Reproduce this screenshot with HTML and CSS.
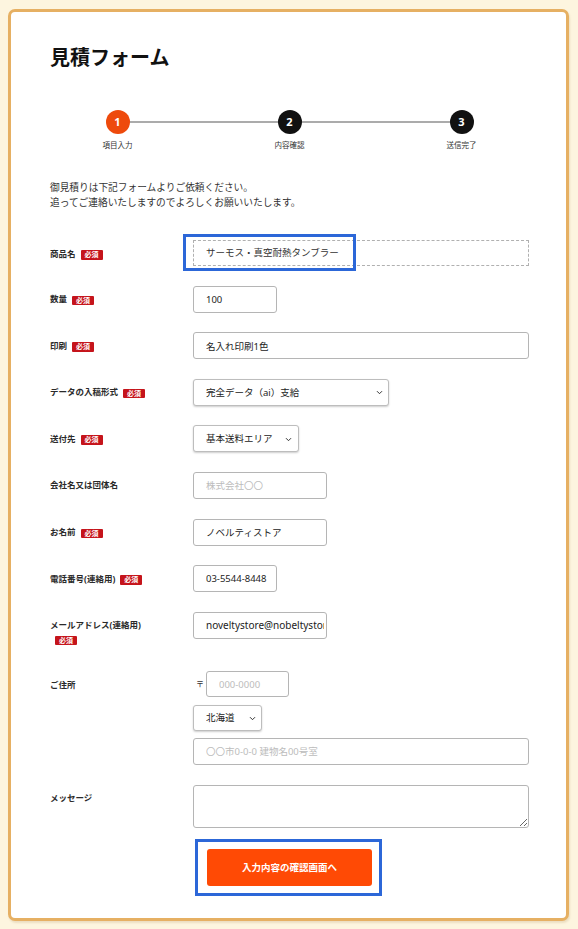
FILE: index.html
```html
<!DOCTYPE html>
<html lang="ja">
<head>
<meta charset="utf-8">
<title>見積フォーム</title>
<link rel="stylesheet" href="styles.css">
</head>
<body>
<main class="card">
  <h1 class="title">見積フォーム</h1>

  <ol class="stepper">
    <li class="step is-current"><span class="step-num">1</span><span class="step-label">項目入力</span></li>
    <li class="step"><span class="step-num">2</span><span class="step-label">内容確認</span></li>
    <li class="step"><span class="step-num">3</span><span class="step-label">送信完了</span></li>
  </ol>

  <p class="intro">御見積りは下記フォームよりご依頼ください。<br>追ってご連絡いたしますのでよろしくお願いいたします。</p>

  <form class="form">
    <div class="row">
      <div class="label">商品名<span class="req">必須</span></div>
      <div class="field">
        <div class="static">サーモス・真空耐熱タンブラー</div>
        <span class="mark"></span>
      </div>
    </div>

    <div class="row">
      <div class="label">数量<span class="req">必須</span></div>
      <div class="field"><input class="input w-s" type="text" value="100"></div>
    </div>

    <div class="row">
      <div class="label">印刷<span class="req">必須</span></div>
      <div class="field"><input class="input w-full" type="text" value="名入れ印刷1色"></div>
    </div>

    <div class="row">
      <div class="label">データの入稿形式<span class="req">必須</span></div>
      <div class="field">
        <div class="select-wrap">
          <select class="select w-data"><option>完全データ（ai）支給</option></select>
          <svg class="chev" width="7" height="5" viewBox="0 0 7 5"><path d="M1 1.2l2.5 2.5L6 1.2" fill="none" stroke="#333" stroke-width="1"/></svg>
        </div>
      </div>
    </div>

    <div class="row">
      <div class="label">送付先<span class="req">必須</span></div>
      <div class="field">
        <div class="select-wrap">
          <select class="select w-area"><option>基本送料エリア</option></select>
          <svg class="chev" width="7" height="5" viewBox="0 0 7 5"><path d="M1 1.2l2.5 2.5L6 1.2" fill="none" stroke="#333" stroke-width="1"/></svg>
        </div>
      </div>
    </div>

    <div class="row">
      <div class="label">会社名又は団体名</div>
      <div class="field"><input class="input w-m" type="text" placeholder="株式会社〇〇"></div>
    </div>

    <div class="row">
      <div class="label">お名前<span class="req">必須</span></div>
      <div class="field"><input class="input w-m" type="text" value="ノベルティストア"></div>
    </div>

    <div class="row">
      <div class="label">電話番号(連絡用)<span class="req">必須</span></div>
      <div class="field"><input class="input w-s" type="text" value="03-5544-8448"></div>
    </div>

    <div class="row">
      <div class="label">メールアドレス(連絡用)<span class="req">必須</span></div>
      <div class="field"><input class="input w-m mail" type="text" value="noveltystore@nobeltystore.com"></div>
    </div>

    <div class="row">
      <div class="label">ご住所</div>
      <div class="field stack">
        <div class="postal"><span class="zip">〒</span><input class="input w-zip h26" type="text" placeholder="000-0000"></div>
        <div class="select-wrap">
          <select class="select w-pref h26"><option>北海道</option></select>
          <svg class="chev" width="7" height="5" viewBox="0 0 7 5"><path d="M1 1.2l2.5 2.5L6 1.2" fill="none" stroke="#333" stroke-width="1"/></svg>
        </div>
        <input class="input w-full" type="text" placeholder="〇〇市0-0-0 建物名00号室">
      </div>
    </div>

    <div class="row row-last">
      <div class="label">メッセージ</div>
      <div class="field"><textarea class="textarea"></textarea></div>
    </div>

    <div class="submit-row">
      <div class="submit-mark"><button type="button" class="btn">入力内容の確認画面へ</button></div>
    </div>
  </form>
</main>
</body>
</html>
```

FILE: styles.css
```css
* { box-sizing: border-box; }

html, body { margin: 0; }

body {
  background: #fdf5df;
  padding: 9px 9px 9px 8px;
  font-family: "Noto Sans", "Noto Sans CJK JP", sans-serif;
  color: #222;
}

.card {
  background: #fff;
  border: 3px solid #e6b063;
  border-radius: 7px;
  box-shadow: 1px 2px 2px rgba(160, 120, 60, 0.18);
  padding: 30.5px 37px 22px 39px;
}

.title {
  margin: 0;
  font-family: "Noto Sans CJK JP", sans-serif;
  font-size: 20px;
  line-height: 28px;
  font-weight: 700;
  color: #111;
}

/* stepper */
.stepper {
  list-style: none;
  padding: 0;
  margin: 39.5px -18.5px 0;
  display: grid;
  grid-template-columns: repeat(3, 1fr);
  position: relative;
}

.stepper::before {
  content: "";
  position: absolute;
  left: 86px;
  right: 86px;
  top: 11px;
  height: 2px;
  background: #ababab;
}

.step {
  display: flex;
  flex-direction: column;
  align-items: center;
}

.step-num {
  position: relative;
  z-index: 1;
  width: 24px;
  height: 24px;
  border-radius: 50%;
  background: #111;
  color: #fff;
  font-family: "Noto Sans", sans-serif;
  font-weight: 700;
  font-size: 11px;
  line-height: 24px;
  text-align: center;
}

.step.is-current .step-num { background: #ee4a0c; }

.step-label {
  margin-top: 5px;
  font-family: "Noto Sans CJK JP", sans-serif;
  font-size: 7.5px;
  line-height: 12px;
  color: #333;
}

/* intro */
.intro {
  margin: 28.5px 0 0;
  font-family: "Noto Sans CJK JP", sans-serif;
  font-size: 9.7px;
  line-height: 15px;
  color: #333;
}

/* form */
.form { margin-top: 30.5px; }

.row {
  display: grid;
  grid-template-columns: 110px 1fr;
  column-gap: 33px;
  align-items: start;
  margin-bottom: 19.6px;
}

.row-last { margin-bottom: 11px; }

.label {
  padding: 6.5px 0 5.5px;
  font-size: 8.5px;
  line-height: 14px;
  font-weight: 700;
  color: #2a2a2a;
}

.req {
  display: inline-block;
  margin-left: 5px;
  padding: 0 4px;
  height: 9.5px;
  line-height: 9.5px;
  vertical-align: -0.5px;
  background: #c5141b;
  color: #fff;
  font-family: "Noto Sans CJK JP", sans-serif;
  font-size: 7px;
  font-weight: 700;
  border-radius: 1px;
}

.field { position: relative; }

.static {
  height: 26px;
  border: 1px dashed #b0b0b0;
  padding: 0 12px;
  font-size: 9.5px;
  line-height: 24px;
  color: #333;
}

.mark {
  position: absolute;
  left: -10px;
  top: -6px;
  width: 173px;
  height: 37px;
  border: 3px solid #2c67d8;
  pointer-events: none;
}

.input,
.select,
.textarea {
  display: block;
  height: 27px;
  border: 1px solid #b5b5b5;
  border-radius: 3px;
  background: #fff;
  font-family: "Noto Sans", "Noto Sans CJK JP", sans-serif;
  font-size: 9.5px;
  color: #222;
  padding: 0 2px 0 12px;
  margin: 0;
  outline: none;
}

.mail { font-size: 10px; }

.h26 { height: 26px; }

.input::placeholder { color: #bcbcbc; }

.w-s { width: 84px; }
.w-m { width: 134px; }
.w-full { width: 100%; }
.w-zip { width: 83px; }

.select-wrap {
  position: relative;
  display: flex;
}

.select {
  -webkit-appearance: none;
  appearance: none;
  padding-right: 22px;
  border-color: #bdbdbd;
  box-shadow: 0 1px 2px rgba(0, 0, 0, 0.2);
}

.w-data { width: 196px; }
.w-area { width: 106px; }
.w-pref { width: 69px; }

.chev {
  position: absolute;
  top: 50%;
  margin-top: -2px;
  pointer-events: none;
}

.w-data + .chev { left: 183px; }
.w-area + .chev { left: 92px; }
.w-pref + .chev { left: 56px; }

.stack {
  display: flex;
  flex-direction: column;
  align-items: flex-start;
  gap: 7.5px;
}

.stack .w-full { width: 100%; }

.postal {
  display: flex;
  align-items: center;
}

.zip {
  margin-left: 3px;
  margin-right: 2px;
  font-family: "Noto Sans CJK JP", sans-serif;
  font-size: 8px;
  line-height: 1;
  color: #333;
}

.textarea {
  width: 100%;
  height: 43px;
  padding: 6px 12px;
  resize: both;
}

.submit-row {
  padding-left: 145px;
}

.submit-mark {
  display: inline-block;
  border: 3px solid #2c67d8;
  padding: 7px 7px 7px 9px;
}

.btn {
  display: block;
  width: 165px;
  height: 37px;
  border: 0;
  border-radius: 3px;
  background: #ff4a05;
  color: #fff;
  font-family: "Noto Sans CJK JP", sans-serif;
  font-size: 9.5px;
  font-weight: 700;
  cursor: pointer;
}
```
